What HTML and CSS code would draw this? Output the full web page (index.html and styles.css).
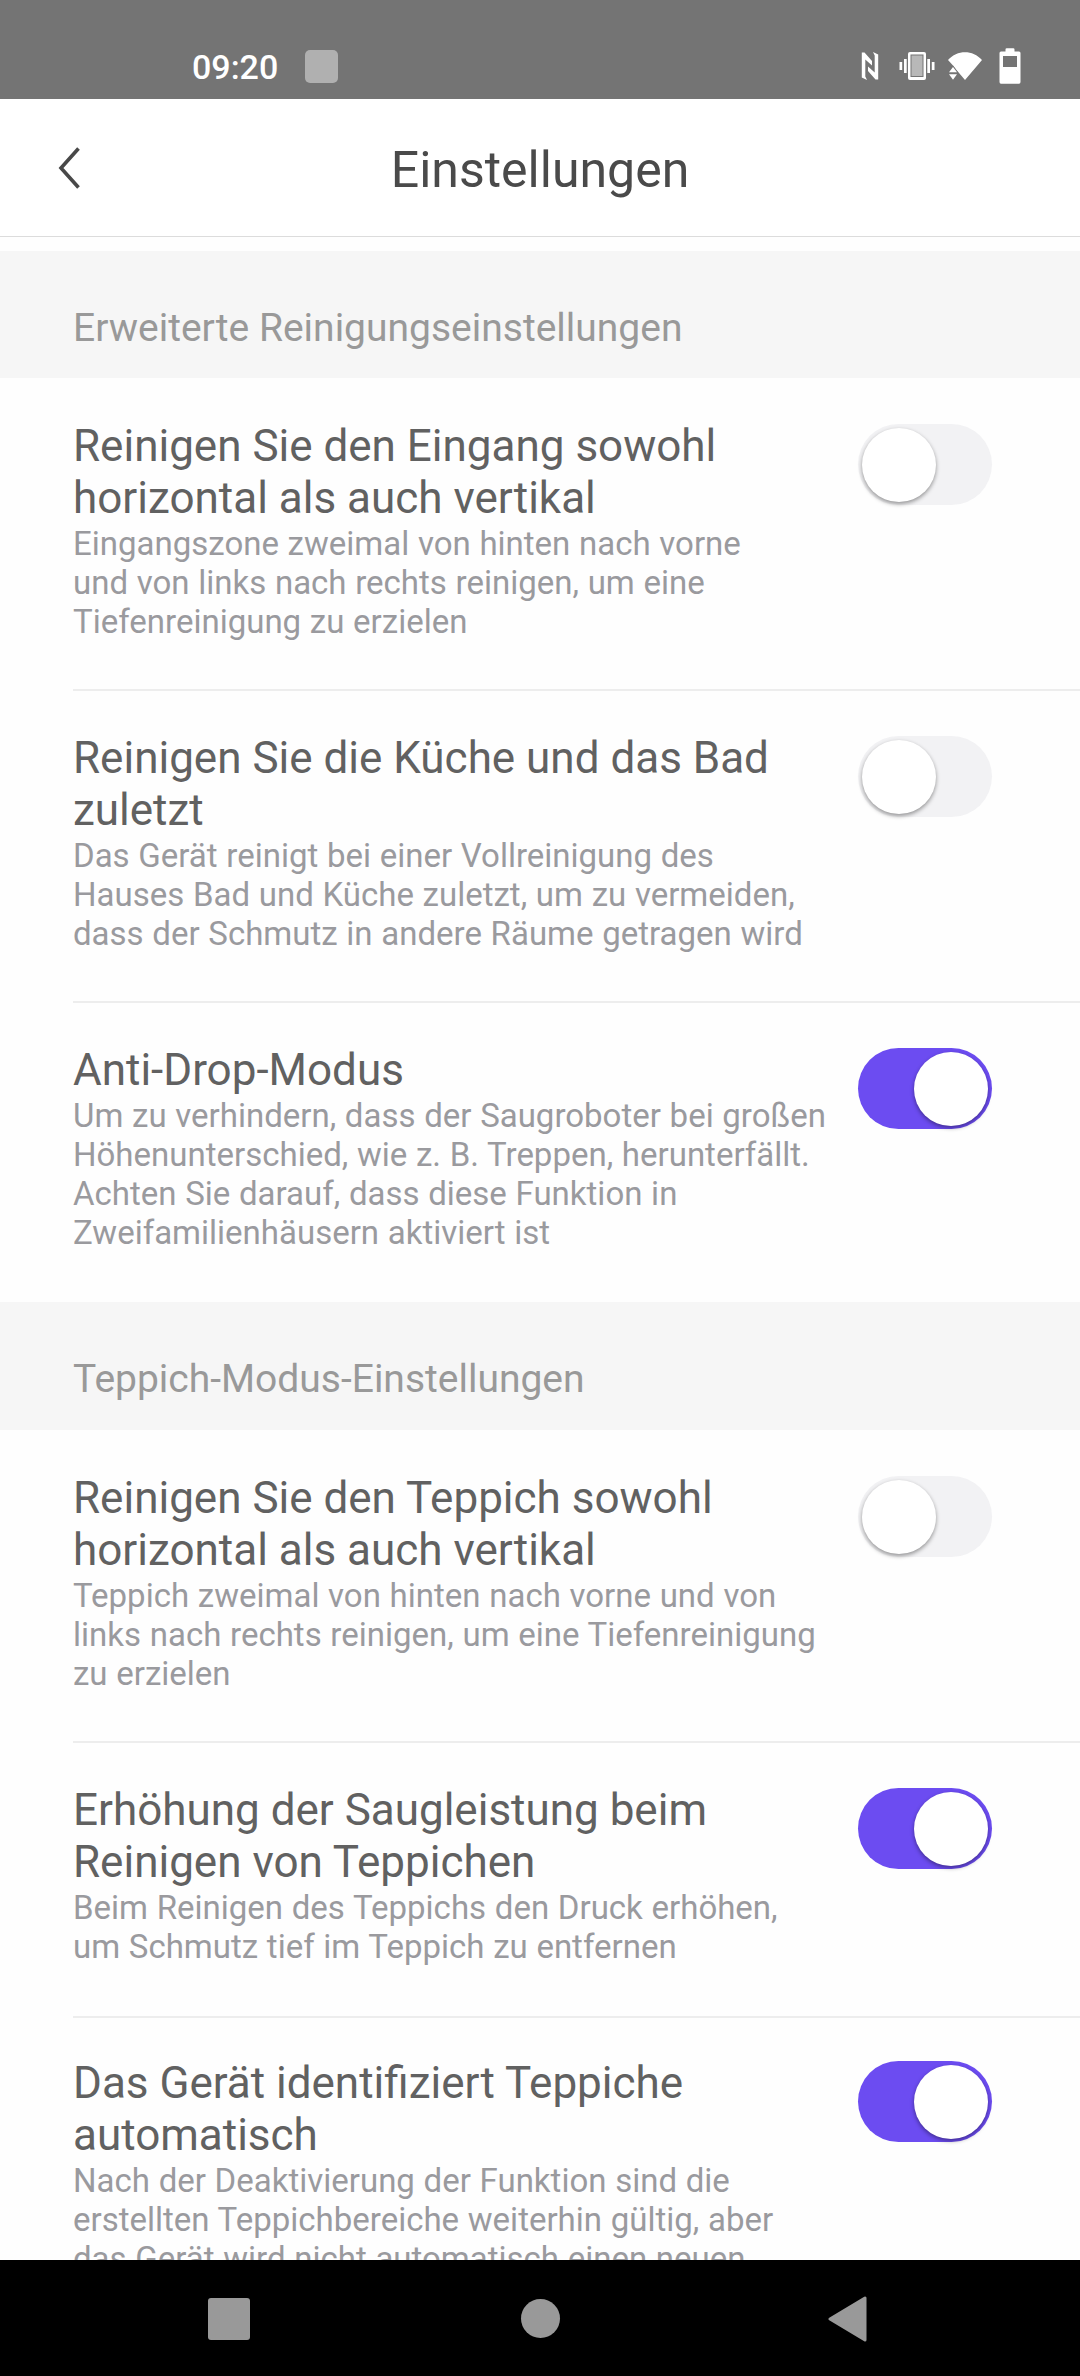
FILE: index.html
```html
<!DOCTYPE html>
<html lang="de">
<head>
  <meta charset="UTF-8">
  <meta name="viewport" content="width=device-width, initial-scale=1.0">
  <title>Einstellungen</title>
  <link rel="stylesheet" href="styles.css">
</head>
<body>

  <div class="status-bar">
    <span class="time">09:20</span>
    <span class="app-dot"></span>
    <div class="status-icons">
      <svg class="icon-nfc" viewBox="0 0 18 28" fill="#fff">
        <path d="M.8 .5H3.500L11 9V13.500L4.300 7.500V24.500L6 28L.8 25.500z"/>
        <path d="M17.200 27.500H14.500L7 19V14.500L13.700 20.500V3.500L12 0L17.200 2.500z"/>
      </svg>
      <svg class="icon-vibrate" viewBox="0 0 36 28">
        <rect x="9" y="0" width="18" height="28" rx="2" fill="#fff"/>
        <rect x="11.5" y="2.500" width="13" height="22.500" fill="#747474"/>
        <rect x="12.5" y="3.500" width="11" height="20.500" fill="#b8b8b8"/>
        <path d="M5 7h2.700v14H5zM28.300 7H31v14h-2.700zM.5 10h2.700v8H.5zM32.800 10h2.700v8h-2.700z" fill="#fff"/>
      </svg>
      <svg class="icon-wifi" viewBox="0 0 34 28" fill="#fff">
        <path d="M0 8C9-2.500 25-2.500 34 8L17 28L8.500 18L5 13.500z"/>
        <path d="M5 13.500L10 20.500V23L5 28.500L0 21z" fill="#747474"/>
        <path d="M5 15L9 20.300H1zM1 22.200H9L5 27.800z"/>
      </svg>
      <svg class="icon-battery" viewBox="0 0 22 36">
        <path d="M6.500 3.500V1.500Q6.500.3 7.700.3H14.300Q15.500.3 15.500 1.500V3.500H20Q21.500 3.500 21.500 5V34Q21.500 35.700 20 35.700H2Q.5 35.700.5 34V5Q.5 3.500 2 3.500z" fill="#fff"/>
        <rect x="4" y="8" width="14" height="11" fill="#747474"/>
      </svg>
    </div>
  </div>

  <header class="header">
    <svg class="back" viewBox="0 0 24 42" fill="none" stroke="#484848" stroke-width="3.6">
      <path d="M21.500 1.500L4 21L21.500 40.500"/>
    </svg>
    <h1>Einstellungen</h1>
  </header>

  <main class="content">
    <h2 class="section-title">Erweiterte Reinigungseinstellungen</h2>
    <div class="item">
      <div class="item-text">
        <h3>Reinigen Sie den Eingang sowohl<br>horizontal als auch vertikal</h3>
        <p>Eingangszone zweimal von hinten nach vorne<br>und von links nach rechts reinigen, um eine<br>Tiefenreinigung zu erzielen</p>
      </div>
      <div class="toggle"><span class="knob"></span></div>
    </div>
    <div class="item">
      <div class="item-text">
        <h3>Reinigen Sie die Küche und das Bad<br>zuletzt</h3>
        <p>Das Gerät reinigt bei einer Vollreinigung des<br>Hauses Bad und Küche zuletzt, um zu vermeiden,<br>dass der Schmutz in andere Räume getragen wird</p>
      </div>
      <div class="toggle"><span class="knob"></span></div>
    </div>
    <div class="item last">
      <div class="item-text">
        <h3>Anti-Drop-Modus</h3>
        <p>Um zu verhindern, dass der Saugroboter bei großen<br>Höhenunterschied, wie z. B. Treppen, herunterfällt.<br>Achten Sie darauf, dass diese Funktion in<br>Zweifamilienhäusern aktiviert ist</p>
      </div>
      <div class="toggle on"><span class="knob"></span></div>
    </div>

    <h2 class="section-title">Teppich-Modus-Einstellungen</h2>
    <div class="item">
      <div class="item-text">
        <h3>Reinigen Sie den Teppich sowohl<br>horizontal als auch vertikal</h3>
        <p>Teppich zweimal von hinten nach vorne und von<br>links nach rechts reinigen, um eine Tiefenreinigung<br>zu erzielen</p>
      </div>
      <div class="toggle"><span class="knob"></span></div>
    </div>
    <div class="item short">
      <div class="item-text">
        <h3>Erhöhung der Saugleistung beim<br>Reinigen von Teppichen</h3>
        <p>Beim Reinigen des Teppichs den Druck erhöhen,<br>um Schmutz tief im Teppich zu entfernen</p>
      </div>
      <div class="toggle on"><span class="knob"></span></div>
    </div>
    <div class="item last">
      <div class="item-text">
        <h3>Das Gerät identifiziert Teppiche<br>automatisch</h3>
        <p>Nach der Deaktivierung der Funktion sind die<br>erstellten Teppichbereiche weiterhin gültig, aber<br>das Gerät wird nicht automatisch einen neuen</p>
      </div>
      <div class="toggle on"><span class="knob"></span></div>
    </div>
  </main>

  <nav class="nav-bar">
    <span class="nav-recent"></span>
    <span class="nav-home"></span>
    <svg class="nav-back" viewBox="0 0 39 46">
      <path d="M37 2V44L2 23z" fill="#999" stroke="#999" stroke-width="3" stroke-linejoin="round"/>
    </svg>
  </nav>

</body>
</html>
```
FILE: styles.css
```css
* {
  box-sizing: border-box;
}

body {
  margin: 0;
  height: 2376px;
  display: flex;
  flex-direction: column;
  overflow: hidden;
  background: #fefefe;
  font-family: Roboto, "Liberation Sans", sans-serif;
}

h1, h2, h3, p {
  margin: 0;
  font-weight: 400;
  white-space: nowrap;
}

/* status bar */
.status-bar {
  flex: none;
  display: flex;
  align-items: center;
  height: 99px;
  padding: 33px 59px 0 192px;
  background: #747474;
}

.time {
  width: 113px;
  padding-top: 2px;
  color: #fff;
  font-size: 34px;
  font-weight: 500;
  line-height: 40px;
}

.app-dot {
  width: 33px;
  height: 33px;
  border-radius: 5px;
  background: #b0b0b0;
}

.status-icons {
  display: flex;
  align-items: center;
  margin-left: auto;
}

.icon-nfc { width: 18px; height: 28px; }
.icon-vibrate { width: 36px; height: 28px; margin-left: 20px; }
.icon-wifi { width: 34px; height: 28px; margin-left: 13px; }
.icon-battery { width: 22px; height: 36px; margin-left: 17px; }

/* header */
.header {
  flex: none;
  display: flex;
  align-items: center;
  height: 138px;
  padding: 1px 57px 0;
  background: #fff;
  border-bottom: 1px solid #dcdcdc;
}

.back {
  width: 24px;
  height: 42px;
}

.header h1 {
  flex: 1;
  margin-right: 24px;
  padding-top: 3px;
  text-align: center;
  color: #4a4a4a;
  font-size: 50px;
  line-height: 60px;
}

/* settings list */
.content {
  flex: 1;
  min-height: 0;
  padding-top: 14px;
  overflow: hidden;
}

.section-title {
  height: 128px;
  padding: 54px 0 0 73px;
  background: #f6f6f6;
  color: #999;
  font-size: 39px;
  line-height: 46px;
}

.section-title:first-child {
  height: 127px;
}

.item {
  display: flex;
  justify-content: space-between;
  align-items: flex-start;
  margin-left: 73px;
  padding: 41px 88px 48px 0;
  border-bottom: 2px solid #ededed;
}

.section-title + .item {
  padding-top: 42px;
}

.item.last {
  padding-bottom: 50px;
  border-bottom: none;
}

.item.short {
  padding-bottom: 50px;
}

.item.short + .item {
  padding-top: 39px;
}

.item h3 {
  color: #616161;
  font-size: 44px;
  line-height: 52px;
}

.item p {
  color: #9a9a9e;
  font-size: 33px;
  line-height: 39px;
  word-spacing: 0.5px;
}

.toggle {
  flex: none;
  display: flex;
  width: 134px;
  height: 81px;
  margin-top: 4px;
  padding: 4px;
  border-radius: 41px;
  background: #f2f2f4;
}

.knob {
  width: 74px;
  height: 74px;
  border-radius: 50%;
  background: #fff;
  box-shadow: 0 2px 4px rgba(0, 0, 0, 0.4);
}

.toggle.on {
  justify-content: flex-end;
  background: #6c4cf1;
}

/* android nav */
.nav-bar {
  flex: none;
  display: flex;
  align-items: center;
  justify-content: space-between;
  height: 116px;
  padding: 1px 213px 0 208px;
  background: #000;
}

.nav-recent {
  width: 42px;
  height: 42px;
  border-radius: 3px;
  background: #999;
}

.nav-home {
  width: 39px;
  height: 39px;
  margin-left: 3px;
  border-radius: 50%;
  background: #999;
}

.nav-back {
  width: 39px;
  height: 46px;
}
```
